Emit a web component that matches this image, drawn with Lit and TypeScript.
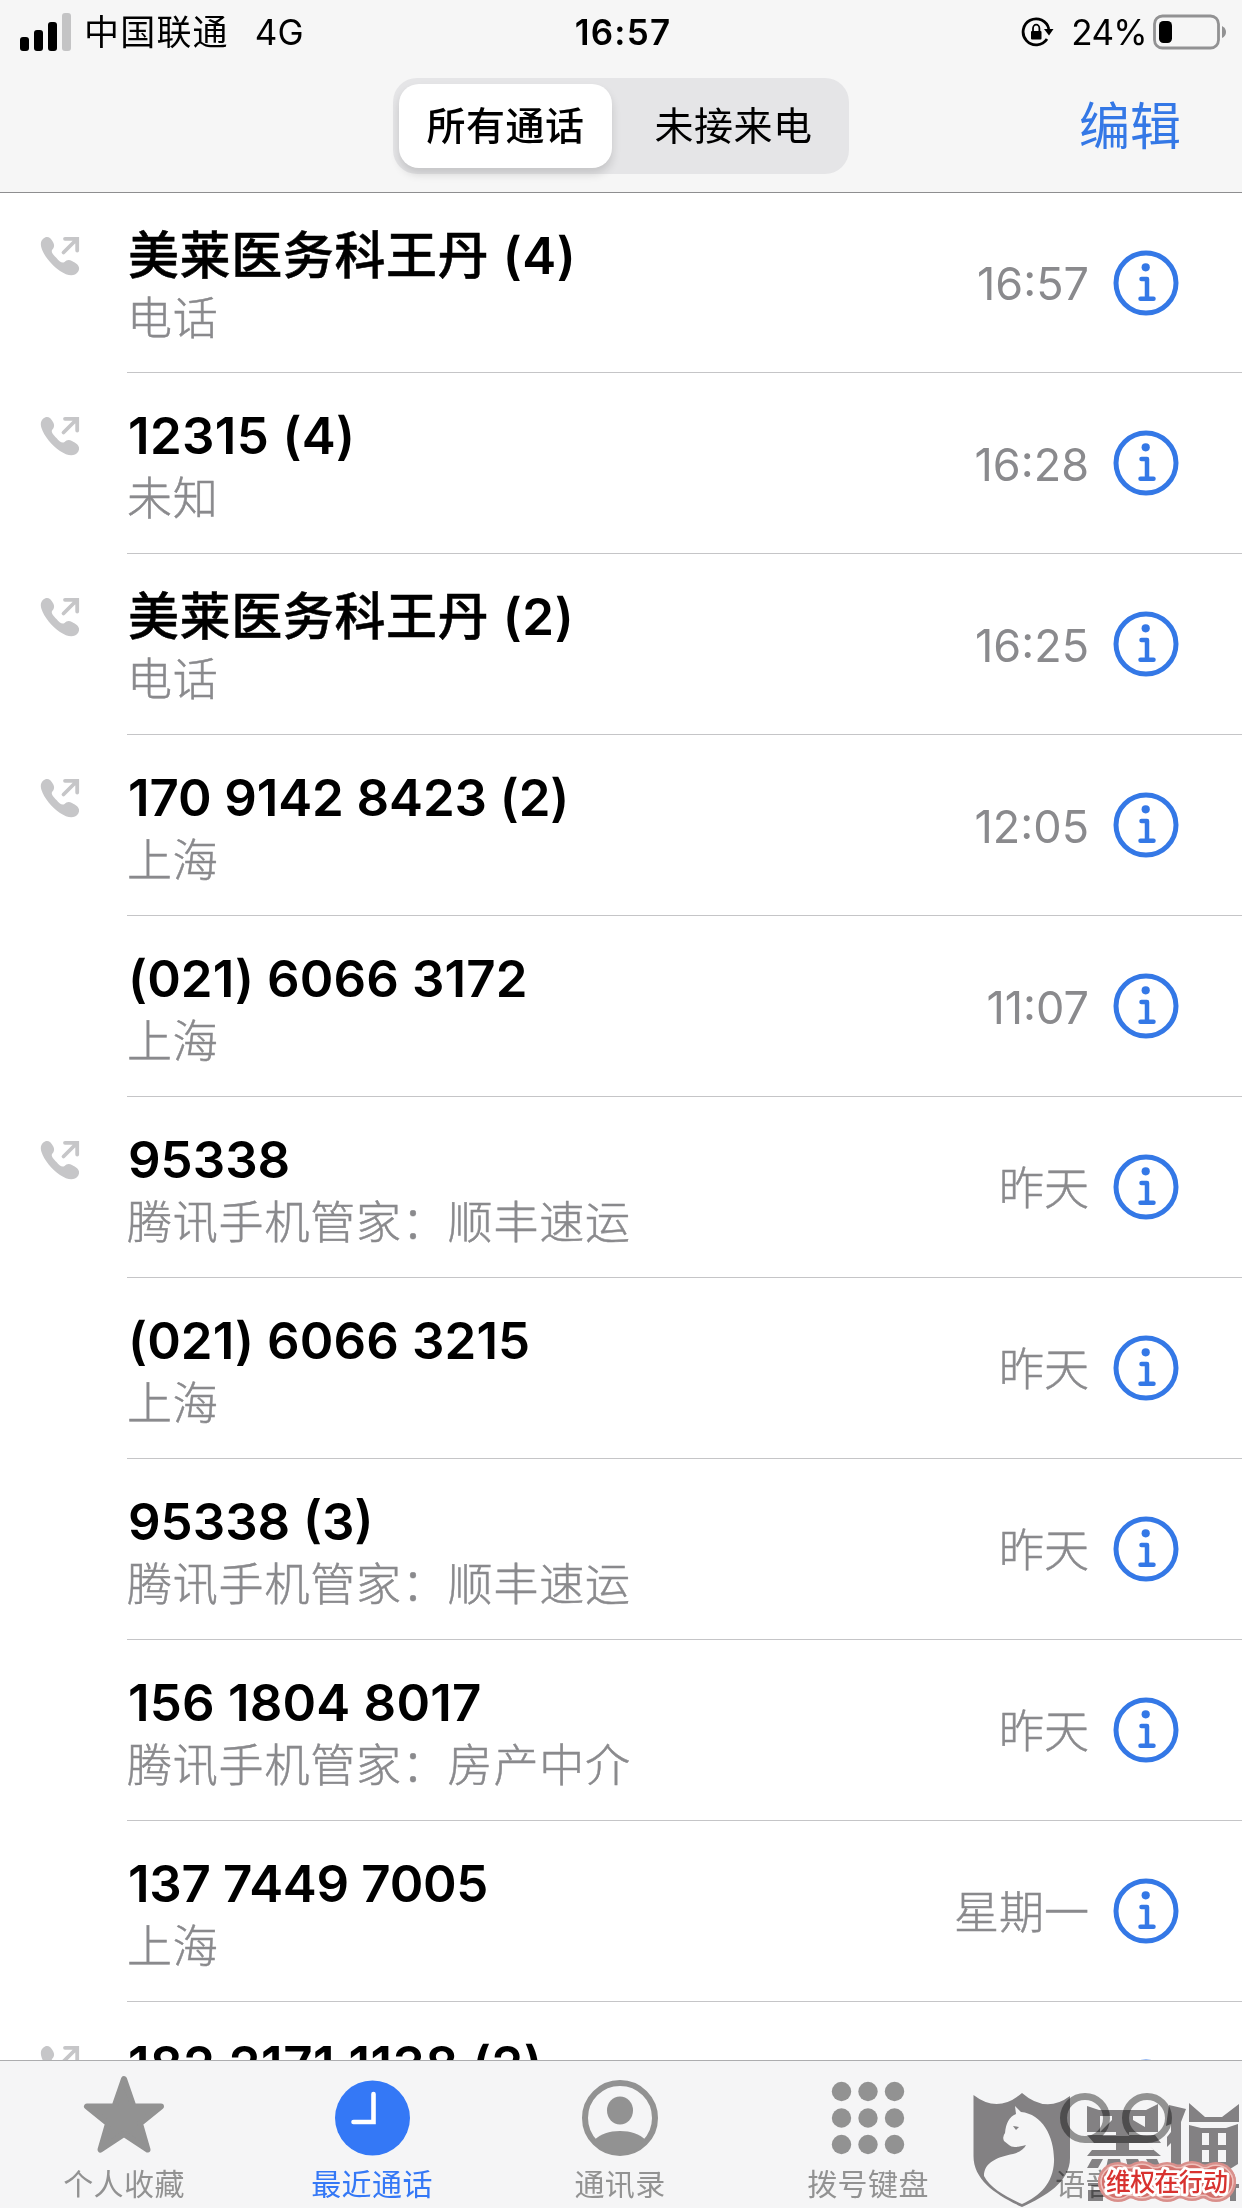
import { LitElement, html, css, svg, nothing } from "lit";
import { customElement } from "lit/decorators.js";
import { styleMap } from "lit/directives/style-map.js";

interface Call { name: string; sub: string; time: string; out: boolean; track: number; }

const CALLS: Call[] = [
  { name: "美莱医务科王丹 (4)", sub: "电话", time: "16:57", out: true, track: 0.6 },
  { name: "12315 (4)", sub: "未知", time: "16:28", out: true, track: 0.35 },
  { name: "美莱医务科王丹 (2)", sub: "电话", time: "16:25", out: true, track: 0.6 },
  { name: "170 9142 8423 (2)", sub: "上海", time: "12:05", out: true, track: -0.1 },
  { name: "(021) 6066 3172", sub: "上海", time: "11:07", out: false, track: 0.1 },
  { name: "95338", sub: "腾讯手机管家：顺丰速运", time: "昨天", out: true, track: 0 },
  { name: "(021) 6066 3215", sub: "上海", time: "昨天", out: false, track: 0.1 },
  { name: "95338 (3)", sub: "腾讯手机管家：顺丰速运", time: "昨天", out: false, track: 0 },
  { name: "156 1804 8017", sub: "腾讯手机管家：房产中介", time: "昨天", out: false, track: 0.2 },
  { name: "137 7449 7005", sub: "上海", time: "星期一", out: false, track: -0.3 },
  { name: "182 2171 1138 (2)", sub: "", time: "", out: true, track: 0.5 },
];

const phoneIcon = svg`<svg class="phone" viewBox="0 0 42 42" width="42" height="42">
  <path fill="#c6c6c8" d="M5 1.500C8 0 11 2 13 6C15 9.500 14 12 12 14C11 16.500 13.500 19 16.500 22C19 25 22 27.800 24.500 26C26.500 23.800 29 23.300 32 25C35 26.700 38.500 28.500 39 31.500C39.500 34 38 37 35 38.500C31 40 26 39 20 35C12 29.500 4 20 1.500 12C0 7 1 3.500 5 1.500Z"/>
  <path fill="none" stroke="#c6c6c8" stroke-width="3.800" stroke-linecap="round" d="M23.500 16.500L36.500 3.500M25 2.800H37.200V14.500"/>
</svg>`;

const infoIcon = svg`<svg class="info" viewBox="0 0 66 66" width="66" height="66">
  <circle cx="33" cy="33" r="30" fill="none" stroke="#3478e6" stroke-width="5"/>
  <circle cx="32.700" cy="17.300" r="4.100" fill="#3478e6"/>
  <path fill="none" stroke="#3478e6" stroke-width="4.500" stroke-linecap="round" stroke-linejoin="round" d="M28.500 29H34V48.700M27.500 48.700H40.500"/>
</svg>`;

@customElement("app-root")
export class AppRoot extends LitElement {
  static styles = css`
    :host { display: block; width: 1242px; height: 2208px; overflow: hidden; position: relative; background: #fff;
      font-family: Inter, "Noto Sans CJK SC", sans-serif; color: #000; }
    * { box-sizing: border-box; }
    svg { display: block; flex: none; }
    .screen { display: flex; flex-direction: column; height: 2208px; }
    .top { height: 193px; flex: none; background: #f6f6f6; border-bottom: 1px solid #8e8e90; display: flex; flex-direction: column; }
    .status { height: 60px; display: grid; grid-template-columns: 1fr auto 1fr; align-items: center; padding: 4px 15px 0 19px; font-size: 35px; line-height: 56px; }
    .left, .right { display: flex; align-items: center; }
    .right { justify-content: flex-end; }
    .carrier { margin-left: 12px; letter-spacing: 1.2px; }
    .net { margin-left: 26px; }
    .clock { font-weight: 600; letter-spacing: 1.2px; }
    .pct { margin: 0 6px 0 16px; letter-spacing: -0.7px; }
    .nav { height: 132px; display: grid; grid-template-columns: 1fr 456px 1fr; align-items: center; padding: 0 61px 0 61px; }
    .seg { grid-column: 2; height: 96px; border-radius: 24px; background: #e5e5e7; display: flex; padding: 6px; font-size: 39px; line-height: 84px; text-align: center; letter-spacing: 0.5px; }
    .seg span { flex: 1; padding-left: 12px; }
    .seg .on { flex: 0 0 213px; padding-left: 0; background: #fff; border-radius: 20px; font-weight: 500; box-shadow: 0 6px 10px rgba(0,0,0,.14); }
    .edit { justify-self: end; color: #3478e6; font-size: 51px; line-height: 80px; padding-top: 2px; }
    .list { flex: 1; min-height: 0; overflow: hidden; }
    .row { height: 181px; display: flex; }
    .row:first-child { height: 180px; margin-top: 0; }
    .row:first-child .kind { padding-top: 43px; }
    .row:first-child .who { padding-top: 33px; }
    .kind { width: 127px; flex: none; padding: 43px 0 0 40px; }
    .body { flex: 1; border-bottom: 1px solid #c5c5c7; display: flex; align-items: center; padding-right: 63px; }
    .who { flex: 1; align-self: flex-start; padding: 33px 0 0 1px; white-space: nowrap; }
    .name { font-size: 51px; font-weight: 600; line-height: 60px; height: 61px; }
    .cjk { font-weight: 500; -webkit-text-stroke: 0.5px #000; }
    .sub { font-size: 45px; line-height: 64px; height: 64px; color: #8a8a8d; font-weight: 300; letter-spacing: 0.8px; margin-left: -1px; -webkit-text-stroke: 0.5px #8a8a8d; }
    .time { font-size: 45px; color: #8a8a8d; margin-right: 24px; padding-top: 2px; }
    .time.word { padding: 0 0 3px; font-weight: 300; -webkit-text-stroke: 0.5px #8a8a8d; }
    .tabs { height: 148px; flex: none; background: #f5f5f6; border-top: 1px solid #adadaf; display: grid; grid-template-columns: repeat(5, 248px); }
    .tab { display: flex; flex-direction: column; align-items: center; padding-top: 13px; color: #929292; font-size: 30px; line-height: 40px; gap: 6px; white-space: nowrap; letter-spacing: 0.4px; }
    .tab.on { color: #3478f6; }
    .mark { position: absolute; left: 940px; top: 2060px; }
    .logo { mix-blend-mode: multiply; }
    .slogan { font-family: "Noto Sans CJK SC", sans-serif; font-weight: 500; font-size: 25px; paint-order: stroke; }
  `;

  private tab(icon: unknown, label: string, on = false) {
    return html`<div class="tab ${on ? "on" : ""}">${icon}<span>${label}</span></div>`;
  }

  private name(text: string) {
    const m = /^([\u4e00-\u9fff]+)(.*)$/.exec(text);
    return m ? html`<span class="cjk">${m[1]}</span>${m[2]}` : text;
  }

  private blob(r: number, fill: string) {
    const ends = [178, 202, 227, 252, 276];
    return svg`<g fill=${fill}>
      <rect x=${178 - r} y=${151.5 - r + 3} width=${98 + 2 * r} height=${2 * r - 6} rx=${r - 3}/>
      ${ends.map((x, i) => svg`<circle cx=${x} cy=${i % 2 ? 151 : 152} r=${r}/>`)}
    </g>`;
  }

  render() {
    return html`<div class="screen">
      <div class="top">
        <div class="status">
          <div class="left">
            <svg width="53" height="40" viewBox="0 0 53 40"><rect x="1" y="25" width="9" height="14" rx="3"/><rect x="15" y="18" width="9" height="21" rx="3"/><rect x="29" y="10" width="9" height="29" rx="3"/><rect x="43" y="1" width="9" height="38" rx="3" fill="#c4c4c5"/></svg>
            <span class="carrier">中国联通</span><span class="net">4G</span>
          </div>
          <div class="clock">16:57</div>
          <div class="right">
            <svg width="34" height="36" viewBox="0 0 34 36"><path d="M27.800 15A13 13 0 1 0 26 25" fill="none" stroke="#000" stroke-width="2.800"/><path d="M23 15H32.500L28 21.500Z"/><rect x="10" y="17" width="10.500" height="8.500" rx="1"/><path d="M12 18V14.500a3.200 3.800 0 0 1 6.400 0V18" fill="none" stroke="#000" stroke-width="1.800"/></svg>
            <span class="pct">24%</span>
            <svg width="74" height="36" viewBox="0 0 74 36"><rect x="1.500" y="2" width="64" height="32" rx="8" fill="none" stroke="#929293" stroke-width="2.800"/><rect x="6" y="7" width="13" height="22" rx="4.500"/><path d="M69 12Q73 14 73 18Q73 22 69 24Z" fill="#929293"/></svg>
          </div>
        </div>
        <div class="nav">
          <div class="seg"><span class="on">所有通话</span><span>未接来电</span></div>
          <div class="edit">编辑</div>
        </div>
      </div>
      <div class="list">
        ${CALLS.map(c => html`<div class="row">
          <div class="kind">${c.out ? phoneIcon : nothing}</div>
          <div class="body">
            <div class="who"><div class="name" style=${styleMap({ letterSpacing: `${c.track}px` })}>${this.name(c.name)}</div><div class="sub">${c.sub}</div></div>
            <div class="time ${/\d/.test(c.time) ? "" : "word"}">${c.time}</div>${infoIcon}
          </div>
        </div>`)}
      </div>
      <div class="tabs">
        ${this.tab(svg`<svg width="84" height="84" viewBox="0 0 84 84"><path d="M42 5L51.500 32.500H79L58 49.500L65.500 75.500L42 60L18.500 75.500L26 49.500L5 32.500H32.500Z" fill="#929292" stroke="#929292" stroke-width="6" stroke-linejoin="round"/></svg>`, "个人收藏")}
        ${this.tab(svg`<svg width="84" height="84" viewBox="0 0 84 84"><circle cx="42.500" cy="44" r="37.500" fill="#3478f6"/><path d="M43.500 20V48H23.500" fill="none" stroke="#fff" stroke-width="4.600" stroke-linecap="round"/></svg>`, "最近通话", true)}
        ${this.tab(svg`<svg width="84" height="84" viewBox="0 0 84 84"><circle cx="42" cy="44" r="35" fill="none" stroke="#929292" stroke-width="6"/><ellipse cx="42" cy="36.500" rx="13" ry="14" fill="#929292"/><path d="M16 66C23 60 31 57 42 57S61 60 68 66C61 77 52 80 42 80S22 77 16 66Z" fill="#929292"/></svg>`, "通讯录")}
        ${this.tab(svg`<svg width="84" height="84" viewBox="0 0 84 84" fill="#929292">${[17.5, 44, 70.5].map(y => [15.5, 42, 68.5].map(x => svg`<circle cx=${x} cy=${y} r="9.700"/>`))}</svg>`, "拨号键盘")}
        ${this.tab(svg`<svg width="116" height="84" viewBox="-3 0 116 84"><circle cx="24" cy="44" r="21.500" fill="none" stroke="#929292" stroke-width="7"/><circle cx="86" cy="44" r="21.500" fill="none" stroke="#929292" stroke-width="7"/><path d="M24 65.500H86" stroke="#929292" stroke-width="7"/></svg>`, "语音留言")}
      </div>
    </div>
    <svg class="mark logo" width="302" height="148" viewBox="0 30 302 148">
      <path fill="#888688" d="M33.500 65Q58 84 82 63Q106 84 130 66V128C130 152 106 166 82 177C56 165 33.500 150 33.500 126Z"/>
      <path fill="#fff" d="M75 76L81 82C103 84 115 108 114 132C113 153 100 166 82 174C66 167 50 158 44 146C44 132 58 127 73 124C80 122 84 119 86 115C78 117 72 118 69 115L64 111Q62 107 65 103C66 93 69 87 76 84Z"/>
      <path fill="#888688" d="M73 96L79 97L76 100Z"/>
      <g fill="#888688">
        <path fill-rule="evenodd" d="M147 76L159 80H206L218 74V102H189V105H215L221 113H189V120H214L209 116L221 126H147L152 120H176V113H154L147 105H176V102H147ZM160 86V102L172 90V86ZM205 86H193V90L205 97Z"/>
        <path d="M152 129H163L158 138H147ZM168 129H180L182 138H166ZM186 129H198L202 138H188ZM206 129H217L221 138H211Z"/>
        <path d="M229 75L246 79L241 92V139H231V113L227 117V107L231 102V94L226 96Z"/>
        <path d="M249 73L265 87H282L299 74V92H249Z"/>
        <path fill-rule="evenodd" d="M249 95L261 98H286L298 94V134L290 139H249ZM262 103V115H269V103ZM278 103V115H286V103ZM262 120V132H269V120ZM278 120V132H286V120Z"/>
        <path d="M148 153H163V156H148ZM148 160H163V171H148ZM288 154H299V158H296V171H290V158H288Z"/>
      </g>
    </svg>
    <svg class="mark" width="302" height="148" viewBox="0 30 302 148">
      ${this.blob(20, "#d98f8b")}${this.blob(17.5, "#eec0bb")}${this.blob(16, "#d3716c")}
      <text class="slogan" x="166" y="161" textLength="122" fill="#d8322f" stroke="#fff" stroke-width="5.500" stroke-linejoin="round">维权在行动</text>
    </svg>`;
  }
}
